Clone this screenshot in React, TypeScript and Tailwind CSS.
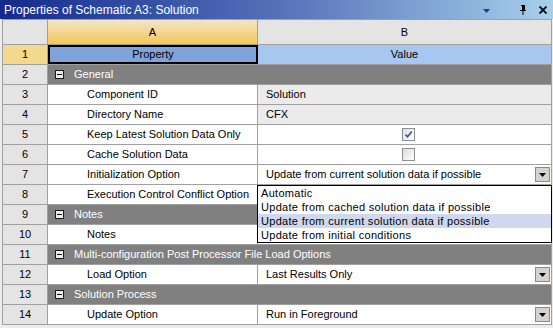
import React from "react";

type Row =
  | { kind: "group"; n: number; label: string }
  | { kind: "prop"; n: number; label: string; value?: string; readOnly?: boolean; check?: boolean; combo?: boolean };

const rows: Row[] = [
  { kind: "group", n: 2, label: "General" },
  { kind: "prop", n: 3, label: "Component ID", value: "Solution", readOnly: true },
  { kind: "prop", n: 4, label: "Directory Name", value: "CFX", readOnly: true },
  { kind: "prop", n: 5, label: "Keep Latest Solution Data Only", check: true },
  { kind: "prop", n: 6, label: "Cache Solution Data", check: false },
  { kind: "prop", n: 7, label: "Initialization Option", value: "Update from current solution data if possible", combo: true },
  { kind: "prop", n: 8, label: "Execution Control Conflict Option" },
  { kind: "group", n: 9, label: "Notes" },
  { kind: "prop", n: 10, label: "Notes" },
  { kind: "group", n: 11, label: "Multi-configuration Post Processor File Load Options" },
  { kind: "prop", n: 12, label: "Load Option", value: "Last Results Only", combo: true },
  { kind: "group", n: 13, label: "Solution Process" },
  { kind: "prop", n: 14, label: "Update Option", value: "Run in Foreground", combo: true },
];

const options = [
  "Automatic",
  "Update from cached solution data if possible",
  "Update from current solution data if possible",
  "Update from initial conditions",
];

function ComboButton() {
  return (
    <div className="ml-auto mr-[1px] flex h-[15px] w-[15px] items-center justify-center border border-[#8a8a8a] bg-[#d6d3ce]">
      <svg width="7" height="4" viewBox="0 0 7 4">
        <path d="M0 0h7L3.5 4z" fill="#000" />
      </svg>
    </div>
  );
}

function CheckBox({ checked }: { checked: boolean }) {
  return (
    <div className="flex h-[13px] w-[13px] items-center justify-center border border-[#8e8f8f] bg-gradient-to-br from-[#dcdcdc] to-[#ffffff]">
      {checked && (
        <svg width="9" height="9" viewBox="0 0 9 9">
          <path d="M1.5 4.5l2 2.2L7.8 1.5" stroke="#3c4f8c" strokeWidth="1.6" fill="none" />
        </svg>
      )}
    </div>
  );
}

function Minus() {
  return (
    <div className="flex h-[9px] w-[9px] items-center justify-center border border-[#1a1a1a] bg-[#ececec]">
      <div className="h-px w-[5px] bg-black" />
    </div>
  );
}

export default function App() {
  return (
    <div
      className="relative h-[328px] w-[553px] overflow-hidden bg-[#ececec] text-[11px] text-black"
      style={{ fontFamily: '"Liberation Sans", Arial, sans-serif' }}
    >
      {/* caption */}
      <div className="flex h-[19px] items-center bg-gradient-to-r from-[#142a8c] via-[#5670b8] to-[#a8d0ea] pl-[4px] pr-[4px]">
        <span className="text-[12px] text-white">Properties of Schematic A3: Solution</span>
        <div className="ml-auto flex items-center">
          <svg width="7" height="4" viewBox="0 0 7 4" className="mr-[29px] mt-[2px]">
            <path d="M0 0h7L3.5 4z" fill="#243a8c" />
          </svg>
          <svg width="8" height="10" viewBox="0 0 8 10" className="mr-[12px]">
            <path d="M2 0h4v1H5v4h2v1H4.5v4h-1V6H1V5h2V1H2z" fill="#000" />
            <path d="M5 1h1v4H5z" fill="#000" />
          </svg>
          <svg width="8" height="8" viewBox="0 0 8 8" className="mr-[2px]">
            <path d="M0.5 0.5L7.5 7.5M7.5 0.5L0.5 7.5" stroke="#000" strokeWidth="1.8" />
          </svg>
        </div>
      </div>

      {/* grid */}
      <div className="ml-[2px] w-[550px] border-l border-t border-[#a0a0a0]">
        {/* column headers */}
        <div className="flex h-[25px] border-b border-[#a0a0a0]">
          <div className="w-[45px] border-r border-[#a0a0a0] bg-[#e4e4e4]" />
          <div className="flex w-[210px] items-center justify-center border-r border-[#a0a0a0] bg-gradient-to-b from-[#f3e6c4] to-[#f4c650]">
            A
          </div>
          <div className="flex flex-1 items-center justify-center border-r border-[#a0a0a0] bg-[#e4e4e4]">B</div>
        </div>

        {/* row 1 */}
        <div className="flex h-[20px] border-b border-[#a0a0a0]">
          <div className="flex w-[45px] items-center justify-center border-r border-[#a0a0a0] bg-[#f3d88e]">1</div>
          <div className="flex w-[210px] items-center justify-center border-2 border-black bg-[#7fa4dc]">Property</div>
          <div className="flex flex-1 items-center justify-center border-r border-[#a0a0a0] bg-[#a6c8f0]">Value</div>
        </div>

        {rows.map((r) =>
          r.kind === "group" ? (
            <div key={r.n} className="flex h-[20px] border-b border-[#a0a0a0]">
              <div className="flex w-[45px] items-center justify-center border-r border-[#a0a0a0] bg-[#e4e4e4]">{r.n}</div>
              <div className="flex flex-1 items-center border-r border-[#a0a0a0] bg-[#808080] pl-[7px] text-white">
                <Minus />
                <span className="ml-[10px]">{r.label}</span>
              </div>
            </div>
          ) : (
            <div key={r.n} className="flex h-[20px] border-b border-[#a0a0a0]">
              <div className="flex w-[45px] items-center justify-center border-r border-[#a0a0a0] bg-[#e4e4e4]">{r.n}</div>
              <div className="flex w-[210px] items-center border-r border-[#a0a0a0] bg-white pl-[39px]">{r.label}</div>
              <div
                className={`flex flex-1 items-center border-r border-[#a0a0a0] pl-[8px] ${
                  r.readOnly ? "bg-[#ebebeb]" : "bg-white"
                } ${r.check !== undefined ? "justify-center pl-0" : ""}`}
              >
                {r.check !== undefined ? (
                  <CheckBox checked={r.check} />
                ) : (
                  <>
                    {r.value && <span>{r.value}</span>}
                    {r.combo && <ComboButton />}
                  </>
                )}
              </div>
            </div>
          )
        )}
      </div>

      {/* open combo list */}
      <div className="absolute left-[257px] top-[185px] w-[295px] border border-black bg-white">
        {options.map((o, i) => (
          <div
            key={o}
            className={`flex h-[14px] items-center pl-[3px] tracking-[0.3px] ${i === 2 ? "bg-[#cfd8ef]" : ""}`}
          >
            {o}
          </div>
        ))}
      </div>
    </div>
  );
}
